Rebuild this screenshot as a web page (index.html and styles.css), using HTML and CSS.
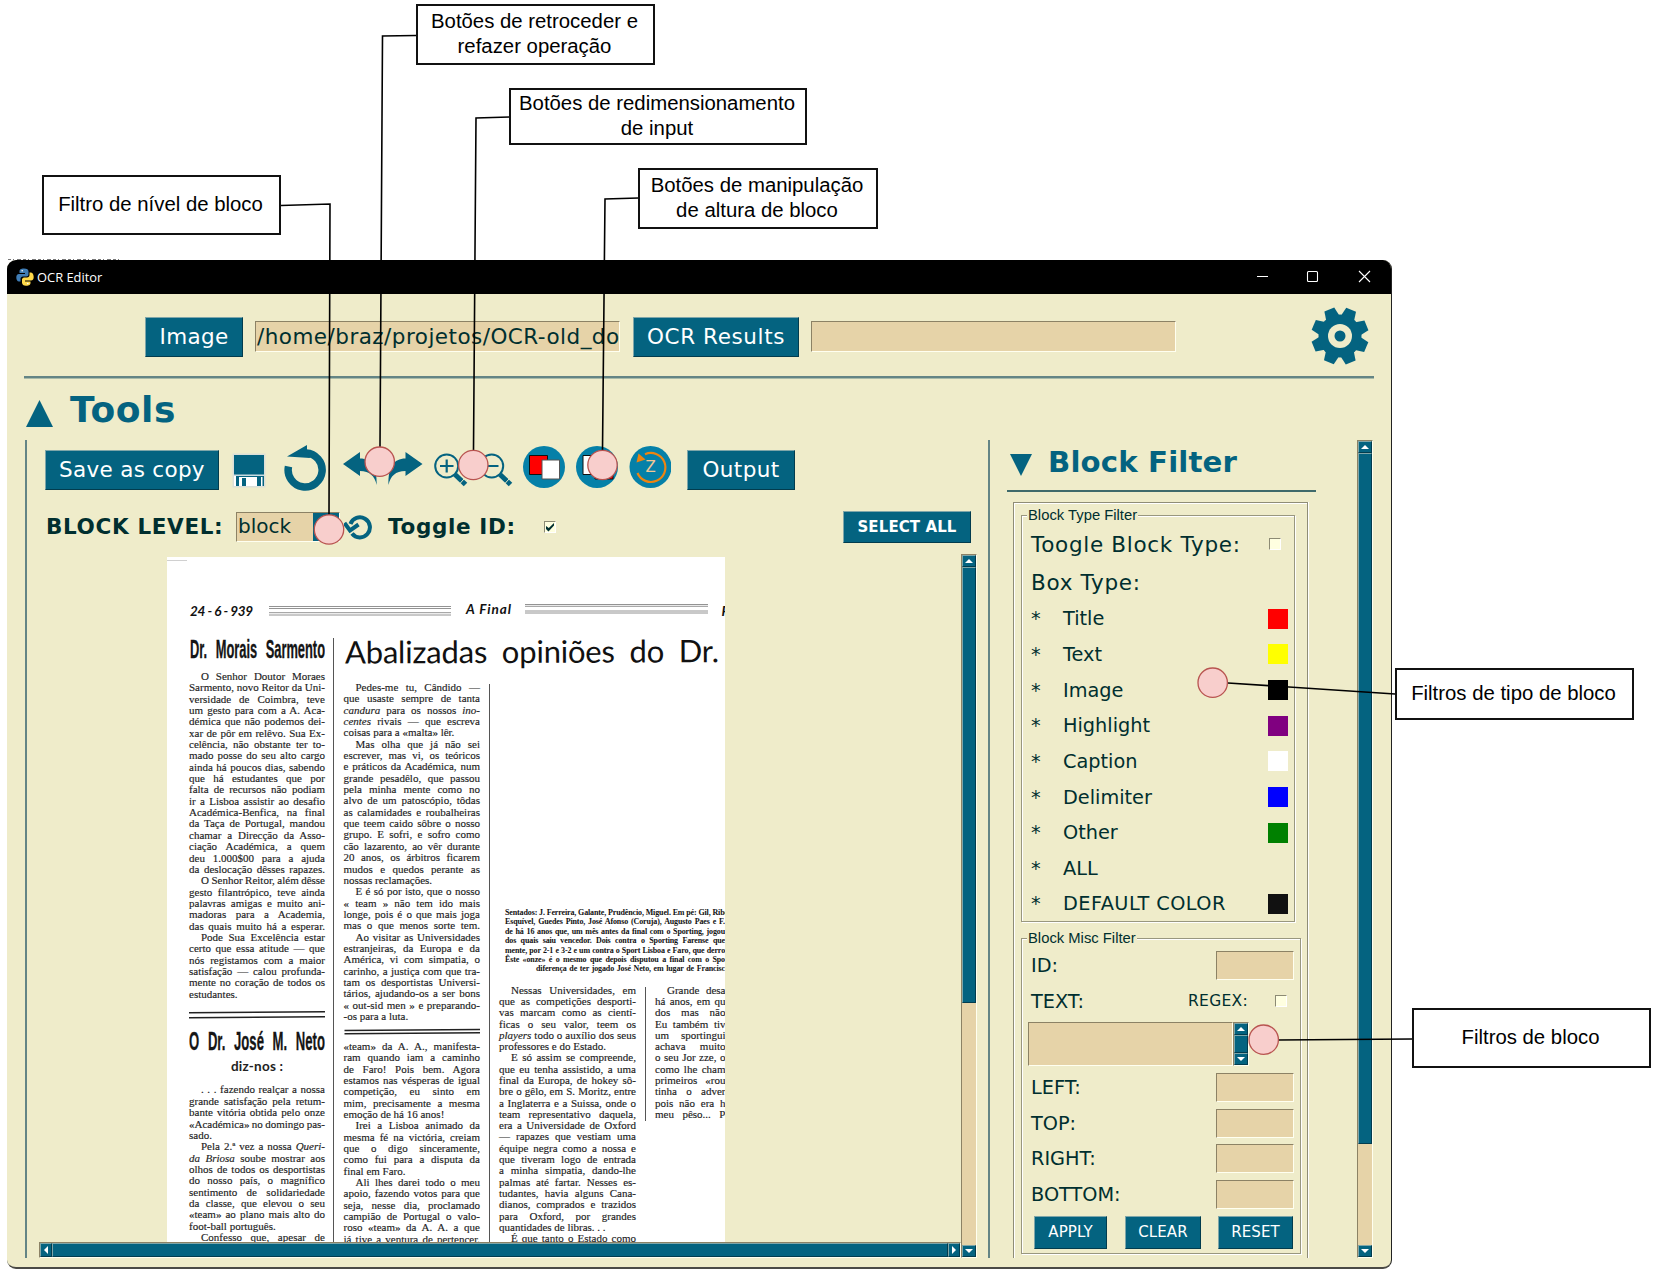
FILE: index.html
```html
<!DOCTYPE html>
<html lang="pt">
<head>
<meta charset="utf-8">
<title>OCR Editor</title>
<link rel="stylesheet" href="styles.css">
</head>
<body>
<div class="stage">
<main class="window">
  <header class="titlebar">
    <svg class="logo" viewBox="0 0 18 18" width="18" height="18"><path fill="#3f7cb5" d="M8 0.500C4.500 .5 3.500 1.700 3.500 3.500V5H9v1H3C1.200 6 .3 7.500 .3 9.500S1.200 13.500 3 13.500h1.500v-2.500c0-1.500 1-2.500 2.500-2.500h3.500c1 0 2-1 2-2v-3C12.500 1.500 11 .5 8 .5z"/><path fill="#ffd94a" d="M10 17.800c3.500 0 4.500-1.200 4.500-2.800v-1.500H9v-1h6c1.800 0 2.700-1.500 2.700-3.500S16.800 4.500 15 4.500h-1.500v2.500c0 1.500-1 2.500-2.500 2.500H8c-1 0-2 1-2 2v3c0 2 1.500 3.300 4 3.300z"/><circle cx="6.200" cy="2.800" r=".8" fill="#fff"/><circle cx="11.800" cy="15.500" r=".8" fill="#fff"/></svg>
    <span>OCR Editor</span>
    <svg class="controls" viewBox="1250 270 128 13" width="128" height="13" fill="none" stroke="#fff" stroke-width="1.100"><path d="M1257 276.500h11"/><rect x="1307.500" y="271.500" width="10" height="10" rx="1"/><path d="M1359 271l11 11M1370 271l-11 11"/></svg>
  </header>
  <section class="files">
    <button class="btn b-image">Image</button>
    <div class="field path">/home/braz/projetos/OCR-old_do</div>
    <button class="btn b-ocr">OCR Results</button>
    <div class="field path"></div>
    <svg class="gear" viewBox="-29 -29 58 58" width="58" height="58" fill="#046380"><defs><path id="tooth" d="M-7.500 -17L-5.300 -28.500H5.300L7.500 -17z"/></defs><g transform="rotate(-22)"><use href="#tooth"/><use href="#tooth" transform="rotate(45)"/><use href="#tooth" transform="rotate(90)"/><use href="#tooth" transform="rotate(135)"/><use href="#tooth" transform="rotate(180)"/><use href="#tooth" transform="rotate(225)"/><use href="#tooth" transform="rotate(270)"/><use href="#tooth" transform="rotate(315)"/></g><circle r="21.500"/><circle r="12" fill="#efecca"/><circle r="5.500"/></svg>
  </section>
  <div class="rule"></div>
  <div class="tools-head"><svg viewBox="0 0 27 27" width="27" height="27"><path d="M13.500 0L27 27H0z" fill="#046380"/></svg><h1>Tools</h1></div>
  <div class="main">
    <section class="left">
      <div class="toolbar">
        <button class="btn b-save">Save as copy</button>
        <svg class="save" viewBox="232 445 36 44" width="36" height="44"><rect x="233.500" y="453.500" width="33" height="34" fill="#dcdfd8"/><path fill="#046380" d="M235 455h30v31h-30z"/><path fill="#c8dbe0" d="M235 474.500h30v1.500h-30z"/><path fill="#fff" d="M240 477h18v9h-18z"/><path fill="#046380" d="M243 478h4v8h-4z"/><path fill="#fff" d="M235 476h2v10h-2zM262 477h1.500v9H262z"/></svg>
        <svg class="reload" viewBox="283 445 44 46" width="44" height="46"><path d="M288.500 466.500A17 17 0 1 0 306 453" fill="none" stroke="#046380" stroke-width="7.500"/><path d="M287 456.500L307 445v4.500l3 8.500z" fill="#046380"/></svg>
        <svg class="undo" viewBox="341 445 84 44" width="84" height="44" fill="#046380"><path d="M343 464l17-12v6.500c12 0 17 9 16.700 26.500-2-9-7-14-16.700-14v5z"/><path d="M422.500 464l-17-12v6.500c-12 0-17.500 9-17 26.500 2-9 7-14 17-14v5z"/></svg>
        <svg class="zoom" viewBox="432 445 82 44" width="82" height="44" fill="none" stroke="#046380" stroke-width="2"><g id="glass"><circle cx="446.700" cy="466" r="11.500"/><path d="M440 466h13.500" stroke-width="2.200"/><path d="M455 474.500L465.500 484.500" stroke-width="5"/><path d="M459.500 484l4.500-5" stroke="#efecca" stroke-width="1"/></g><path d="M446.700 459.500v13" stroke-width="2.200"/><use href="#glass" x="45"/></svg>
        <svg class="front" viewBox="523 445 42 44" width="42" height="44"><circle cx="544" cy="467" r="21" fill="#0580a8"/><path d="M529.500 455.500h18v19h-18z" fill="red" stroke="#111"/><path d="M542 460h17.500v19H542z" fill="#fff" stroke="#555"/></svg>
        <svg class="back" viewBox="576 445 42 44" width="42" height="44"><circle cx="597" cy="467" r="21" fill="#0580a8"/><path d="M595 460h18v19h-18z" fill="red" stroke="#111"/><path d="M583 455.500h18v19h-18z" fill="#fff" stroke="#111"/></svg>
        <svg class="zed" viewBox="629 445 42 44" width="42" height="44"><circle cx="650.500" cy="467" r="21" fill="#0580a8"/><path d="M645 454.200A14.500 14.500 0 1 1 637.500 473" fill="none" stroke="#ee8410" stroke-width="2.200"/><path d="M636.500 462.500l2-9 7 6z" fill="#ee8410"/><text x="650.700" y="472" text-anchor="middle" font-family="DejaVu Sans" font-size="15" fill="#f2c795">Z</text></svg>
        <button class="btn b-output">Output</button>
      </div>
      <div class="levels">
        <b>BLOCK LEVEL:</b>
        <div class="field combo"><span>block</span><i></i></div>
        <svg class="mini" viewBox="344 512 28 28" width="28" height="28"><path d="M352 532.500A10 10 0 1 0 350.500 523" fill="none" stroke="#046380" stroke-width="4"/><path d="M344.500 522l5.500 7.500 8.500-6" fill="none" stroke="#046380" stroke-width="4"/></svg>
        <b class="toggle">Toggle ID:</b>
        <div class="check"><svg viewBox="0 0 10 10" width="10" height="10"><path d="M1 4v3l2.500 2.500L9 3.500V1L3.800 6z" fill="#002f2f"/></svg></div>
        <button class="btn b-all">SELECT ALL</button>
      </div>
      <div class="viewer">
        <div class="canvas">
          <article class="scan">
            <svg viewBox="167 557 558 70" width="558" height="70" stroke="#777"><g stroke="none" fill="#111" font-family="Lato" font-style="italic" font-weight="bold" font-size="13.500"><text x="190" y="616" textLength="63">24 - 6 - 939</text><text x="466" y="614" textLength="45">A Final</text><text x="721.500" y="616">F</text></g><path d="M269 606.500h182M269 608.500h182M269 612.700h182M269 615h182M525 604.500h183M525 606.300h183M525 611h183M525 613h183" stroke-width=".8"/><path d="M167 560.500h20" stroke="#bbb" stroke-width=".7"/></svg>
            <div class="scan-body">
              <div class="col c1">
                <svg viewBox="189 627 136 44" width="136" height="44"><text class="poster" x="190" y="658" textLength="135" lengthAdjust="spacingAndGlyphs">Dr. Morais Sarmento</text></svg>
                <p>O Senhor Doutor Moraes
Sarmento, novo Reitor da Uni-
versidade de Coimbra, teve
um gesto para com a A. Aca-
démica que não podemos dei-
xar de pôr em relêvo. Sua Ex-
celência, não obstante ter to-
mado posse do seu alto cargo
ainda há poucos dias, sabendo
que há estudantes que por
falta de recursos não podiam
ir a Lisboa assistir ao desafio
Académica-Benfica, na final
da Taça de Portugal, mandou
chamar a Direcção da Asso-
ciação Académica, a quem
deu 1.000$00 para a ajuda
da deslocação dêsses rapazes.</p>
                <p>O Senhor Reitor, além dêsse
gesto filantrópico, teve ainda
palavras amigas e muito ani-
madoras para a Academia,
das quais muito há a esperar.</p>
                <p>Pode Sua Excelência estar
certo que essa atitude — que
nós registamos com a maior
satisfação — calou profunda-
mente no coração de todos os</p>
                <p class="end">estudantes.</p>
                <svg viewBox="189 1000.500 136 84.500" width="136" height="84.500"><path d="M189 1013.300l136-1M189 1018.300l136-1" stroke="#222" stroke-width="1.400"/><text class="poster" x="189" y="1050" textLength="136" lengthAdjust="spacingAndGlyphs">O Dr. José M. Neto</text><text x="231" y="1071" textLength="52" font-family="Lato" font-weight="bold" font-size="13.500" fill="#222">diz-nos :</text></svg>
                <p>. . . fazendo realçar a nossa
grande satisfação pela retum-
bante vitória obtida pelo onze
«Académica» no domingo pas-</p>
                <p class="end">sado.</p>
                <p>Pela 2.ª vez a nossa <i>Queri-
da Briosa</i> soube mostrar aos
olhos de todos os desportistas
do nosso país, o magnífico
sentimento de solidariedade
da classe, que elevou o seu
«team» ao plano mais alto do</p>
                <p class="end">foot-ball português.</p>
                <p>Confesso que, apesar de</p>
              </div>
              <div class="vrule v1"></div>
              <div class="rest">
                <svg viewBox="343.500 627 381.500 55" width="381.500" height="55"><text x="344.500" y="663.500" textLength="374" font-family="Lato" font-size="31" word-spacing="7" fill="#111" transform="rotate(-.2 345 663)">Abalizadas opiniões do Dr.</text></svg>
                <div class="cols">
                  <div class="col c2">
                    <p>Pedes-me tu, Cândido —
que usaste sempre de tanta
<i>candura</i> para os nossos <i>ino-
centes</i> rivais — que escreva</p>
                    <p class="end">coisas para a «malta» lêr.</p>
                    <p>Mas olha que já não sei
escrever, mas vi, os teóricos
e práticos da Académica, num
grande pesadêlo, que passou
pela minha mente como no
alvo de um patoscópio, tôdas
as calamidades e roubalheiras
que teem caido sôbre o nosso
grupo. E sofri, e sofro como
cão lazarento, ao vêr durante
20 anos, os árbitros ficarem
mudos e quedos perante as</p>
                    <p class="end">nossas reclamações.</p>
                    <p>E é só por isto, que o nosso
« team » não tem ido mais
longe, pois é o que mais joga
mas o que menos sorte tem.</p>
                    <p>Ao visitar as Universidades
estranjeiras, da Europa e da
América, vi com simpatia, o
carinho, a justiça com que tra-
tam os desportistas Universi-
tários, ajudando-os a ser bons
« out-sid men » e preparando-</p>
                    <p class="end">-os para a luta.</p>
                    <svg viewBox="343.500 1022 136.500 18.500" width="136.500" height="18.500"><path d="M344 1030.500l136-1M344 1033.700l136-1" stroke="#222" stroke-width="1.400"/></svg>
                    <p class="flush">«team» da A. A., manifesta-
ram quando iam a caminho
de Faro! Pois bem. Agora
estamos nas vésperas de igual
competição, eu sinto em
mim, precisamente a mesma</p>
                    <p class="end">emoção de há 16 anos!</p>
                    <p>Irei a Lisboa animado da
mesma fé na victória, creiam
que o digo sinceramente,
como fui para a disputa da</p>
                    <p class="end">final em Faro.</p>
                    <p>Ali lhes darei todo o meu
apoio, fazendo votos para que
seja, nesse dia, proclamado
campião de Portugal o valo-
roso «team» da A. A. a que
já tive a ventura de pertencer.</p>
                  </div>
                  <div class="vrule v2"></div>
                  <div class="far">
                    <div class="caption"><span>Sentados: J. Ferreira, Galante, Prudêncio, Miguel. Em pé: Gil, Ribe</span><span>Esquível, Guedes Pinto, José Afonso (Coruja), Augusto Paes e F.</span><span>de há 16 anos que, um mês antes da final com o Sporting, jogou</span><span>dos quais saiu vencedor. Dois contra o Sporting Farense que</span><span>mente, por 2-1 e 3-2 e um contra o Sport Lisboa e Faro, que derro</span><span>Êste «onze» é o mesmo que depois disputou a final com o Spo</span><span class="in">diferença de ter jogado José Neto, em lugar de Francisc</span></div>
                    <div class="cols">
                      <div class="col c3">
                        <p>Nessas Universidades, em
que as competições desporti-
vas marcam como as cientí-
ficas o seu valor, teem os
<i>players</i> todo o auxílio dos seus</p>
                        <p class="end">professores e do Estado.</p>
                        <p>E só assim se compreende,
que eu tenha assistido, a uma
final da Europa, de hokey sô-
bre o gêlo, em S. Moritz, entre
a Inglaterra e a Suissa, onde o
team representativo daquela,
era a Universidade de Oxford
— rapazes que vestiam uma
équipe negra como a nossa e
que tiveram logo de entrada
a minha simpatia, dando-lhe
palmas até fartar. Nesses es-
tudantes, havia alguns Cana-
dianos, comprados e trazidos
para Oxford, por grandes</p>
                        <p class="end">quantidades de libras. . .</p>
                        <p>É que tanto o Estado como</p>
                      </div>
                      <div class="vrule v3"></div>
                      <div class="col c4">
                        <p>Grande desa
há anos, em qu
dos mas não
Eu também tiv
um sportingui
achava muito
o seu Jor zze, o
como lhe cham
primeiros «rou
tinha o adver
pois não era h
meu pêso... P</p>
                      </div>
                    </div>
                  </div>
                </div>
              </div>
            </div>
          </article>
        </div>
        <div class="sb v"><i class="arr up"></i><i class="thumb doc"></i><i class="trough"></i><i class="arr down"></i></div>
        <div class="sb h"><i class="arr lt"></i><i class="thumb"></i><i class="arr rt"></i></div>
      </div>
    </section>
    <section class="right">
      <div class="filter">
        <div class="filter-head"><svg viewBox="0 0 22 22" width="22" height="22"><path d="M0 0h22L11 22z" fill="#046380"/></svg><h2>Block Filter</h2></div>
        <div class="panel">
          <div class="group types">
            <h3>Block Type Filter</h3>
            <div class="big">Toogle Block Type:<div class="check"></div></div>
            <div class="big box">Box Type:</div>
            <ul>
              <li><span>*</span>Title<i class="red"></i></li>
              <li><span>*</span>Text<i class="yellow"></i></li>
              <li><span>*</span>Image<i class="black"></i></li>
              <li><span>*</span>Highlight<i class="purple"></i></li>
              <li><span>*</span>Caption<i class="white"></i></li>
              <li><span>*</span>Delimiter<i class="blue"></i></li>
              <li><span>*</span>Other<i class="green"></i></li>
              <li><span>*</span>ALL</li>
              <li class="default"><span>*</span>DEFAULT COLOR<i class="dark"></i></li>
            </ul>
          </div>
          <div class="group misc">
            <h3>Block Misc Filter</h3>
            <div class="row">ID:<div class="field"></div></div>
            <div class="row">TEXT:<small>REGEX:</small><div class="check"></div></div>
            <div class="area"><div class="field"></div><div class="sb v"><i class="arr up"></i><i class="thumb"></i><i class="arr down"></i></div></div>
            <div class="row">LEFT:<div class="field"></div></div>
            <div class="row">TOP:<div class="field"></div></div>
            <div class="row">RIGHT:<div class="field"></div></div>
            <div class="row">BOTTOM:<div class="field"></div></div>
            <div class="actions"><button class="btn">APPLY</button><button class="btn">CLEAR</button><button class="btn">RESET</button></div>
          </div>
        </div>
      </div>
      <div class="sb v side"><i class="arr up"></i><i class="thumb tools"></i><i class="trough"></i><i class="arr down"></i></div>
    </section>
  </div>
</main>
<svg class="wires" viewBox="0 0 1660 1279" width="1660" height="1279" fill="none" stroke="#000" stroke-width="1.600">
  <path d="M8 259.500h112" stroke="#777" stroke-width="1" stroke-dasharray="3 2 1 3 4 2"/>
  <path d="M281 205.500L330 204L329 515M416 35.500L382.500 36L380 447M509.500 117L476 118L473.500 450M638.500 198L605 199L602.500 450M1228 683L1395 694M1278 1040L1412 1039"/>
  <g fill="#f8cecc" stroke="#b85450" stroke-width="1.300"><circle cx="329" cy="529.500" r="14.700"/><circle cx="379.700" cy="461.700" r="14.700"/><circle cx="473.300" cy="465" r="14.700"/><circle cx="602.500" cy="465" r="14.700"/><circle cx="1212.700" cy="682.700" r="14.700"/><circle cx="1263.700" cy="1039.700" r="14.700"/></g>
</svg>
<div class="note n1">Botões de retroceder e<br>refazer operação</div>
<div class="note n2">Botões de redimensionamento<br>de input</div>
<div class="note n3">Botões de manipulação<br>de altura de bloco</div>
<div class="note n4">Filtro de nível de bloco</div>
<div class="note n5">Filtros de tipo de bloco</div>
<div class="note n6">Filtros de bloco</div>
</div>
</body>
</html>
```
FILE: styles.css
```css
* { box-sizing: border-box; }
body { margin: 0; background: #fff; }
h1, h2, h3, p, ul { margin: 0; padding: 0; }
svg { display: block; flex: none; }
.stage { position: relative; width: 1660px; height: 1279px; padding: 260px 0 0 7px; overflow: hidden; }
.window { width: 1385px; height: 1009px; display: flex; flex-direction: column; overflow: hidden; border-radius: 9px; background: #efecca; border-right: 1px solid #222; border-bottom: 2px solid #4a4a46; font-family: "DejaVu Sans", sans-serif; font-size: 21.500px; color: #002f2f; }
.titlebar { flex: none; height: 34px; background: #000; color: #fff; display: flex; align-items: center; padding-left: 9px; font: 12.900px "Open Sans", sans-serif; }
.titlebar span { margin: 0 0 0 3px; }
.controls { margin: 0 13px 1px auto; }

.btn { flex: none; height: 40px; padding: 0 0 1px; font: 21.500px "DejaVu Sans", sans-serif; letter-spacing: .3px; color: #fff; background: #046380; border: 1px solid; border-color: #7fa6a9 #023c4e #023c4e #7fa6a9; border-radius: 0; white-space: nowrap; }
.field { flex: none; background: #e6d3a8; border: 1px solid; border-color: #8c8265 #fffff0 #fffff0 #8c8265; overflow: hidden; white-space: nowrap; }
.check { width: 12px; height: 12px; flex: none; background: #ffffe0; border: 1px solid; border-color: #8c8a74 #fff #fff #8c8a74; }

.files { flex: none; height: 82px; padding: 3px 0 0 138px; display: flex; align-items: center; }
.path { width: 365px; height: 31px; padding-left: 1px; line-height: 30px; letter-spacing: .47px; }
.b-image { width: 98px; margin-right: 12px; }
.b-ocr { width: 166px; margin: 0 12px 0 13px; letter-spacing: .6px; }
.gear { margin-left: 135px; margin-top: -2px; }
.rule { flex: none; height: 3px; margin: 0 17px 0 17px; background: #648585; border-bottom: 1px solid #a9bba9; }
.tools-head { flex: none; height: 61px; padding: 0 0 0 19px; display: flex; align-items: center; }
.tools-head svg { margin-top: 7px; }
.tools-head h1 { margin: 1px 0 0 17px; font-size: 36px; line-height: 42px; letter-spacing: .6px; color: #046380; }

.main { flex: none; height: 818px; padding-left: 18px; display: flex; }
.left { width: 965px; border-left: 2px solid #648585; border-right: 2px solid #648585; }
.toolbar { height: 60px; padding: 10px 0 0 18px; display: flex; }
.toolbar svg { margin-top: -5px; }
.b-save { width: 174px; }
.save { margin-left: 12px; }
.reload { margin-left: 16px; }
.undo { margin-left: 14px; }
.zoom { margin-left: 7px; }
.front { margin-left: 9px; }
.back, .zed { margin-left: 11px; }
.b-output { width: 108px; margin-left: 16px; letter-spacing: .4px; }
.levels { height: 54px; padding: 0 0 1px 19px; display: flex; align-items: center; }
.levels b { width: 190px; font-size: 21.500px; letter-spacing: .65px; white-space: nowrap; }
.combo { width: 104px; height: 30px; display: flex; line-height: 27px; font-size: 20px; }
.combo span { flex: 1; padding-left: 1px; }
.combo i { width: 26px; background: #046380; }
.mini { margin-left: 4px; }
.levels .toggle { margin-left: 16px; width: 156px; }
.b-all { width: 128px; height: 32px; margin: 1px 0 0 287px; font-size: 15px; font-weight: bold; letter-spacing: .1px; }

.viewer { margin-left: 12px; width: 938px; display: grid; grid-template: 688px 16px / 922px 16px; }
.canvas { padding: 3px 0 0 128px; overflow: hidden; }
.scan { width: 558px; height: 685px; overflow: hidden; background: #fff; }
.sb { display: flex; background: #e6d3a8; border: 1px solid; border-color: #8c8265 #fffff0 #fffff0 #8c8265; }
.sb.v { grid-row: 1 / 3; grid-column: 2; flex-direction: column; width: 16px; }
.sb.h { grid-row: 2; grid-column: 1; }
.thumb, .arr { background: #046380; border: 1px solid; border-color: #7fa6a9 #023c4e #023c4e #7fa6a9; }
.thumb { flex: 1; }
.trough { flex: 1; }
.thumb.doc { flex: none; height: 436px; }
.thumb.tools { flex: none; height: 691px; }
.arr { flex: none; width: 14px; height: 12px; display: grid; place-items: center; }
.h .arr { width: 12px; height: 14px; }
.arr::before { content: ""; border: 4px solid transparent; }
.up::before { border-width: 0 4px 4px; border-bottom-color: #fff; }
.down::before { border-width: 4px 4px 0; border-top-color: #fff; }
.lt::before { border-width: 4px 4px 4px 0; border-right-color: #fff; }
.rt::before { border-width: 4px 0 4px 4px; border-left-color: #fff; }

.scan-body, .cols { display: flex; }
.col { flex: none; font: 11px/11.340px "Liberation Serif", serif; color: #1c1c1c; -webkit-text-stroke: .15px #222; }
.col p { white-space: pre-line; text-align-last: justify; word-spacing: -2px; text-indent: 12px; }
.col p.end { text-align-last: left; text-indent: 0; word-spacing: 0; }
.col p.flush { text-indent: 0; }
.poster { font: bold 26px "Liberation Sans", sans-serif; word-spacing: 10px; fill: #151515; stroke: #151515; stroke-width: .3px; }
.c1 { width: 136px; margin-left: 22px; }
.c2 { width: 136.500px; }
.c3 { width: 137px; line-height: 11.290px; }
.c4 { width: 70.500px; margin-left: 9px; line-height: 11.290px; }
.rest { width: 381.500px; flex: none; }
.vrule { flex: none; width: 1px; background: #555; }
.v1 { margin: 11px 9.500px 0 8px; }
.v2 { margin: 2px 9px 0 9px; }
.v3 { margin: 2px 0 0 9px; height: 134px; }
.far { width: 226px; flex: none; }
.caption { margin: 226px 0 11px 6px; width: 220px; font: bold 8px/9.380px "Liberation Serif", serif; color: #111; }
.caption span { display: block; height: 9.380px; white-space: nowrap; text-align-last: justify; letter-spacing: -.13px; }
.caption .in { padding-left: 31px; }

.right { display: flex; }
.filter { width: 309px; margin-left: 17px; }
.filter-head { height: 52px; padding-left: 3px; display: flex; align-items: center; border-bottom: 2px solid #3f6a6b; }
.filter-head svg { margin-top: 0; }
.filter-head h2 { margin: -6px 0 0 16px; font-size: 29.200px; letter-spacing: .15px; line-height: 36px; color: #046380; white-space: nowrap; }
.panel { width: 295px; height: 756px; margin: 10px 0 0 6px; padding: 12px 6px 0 7px; border: 1px solid #8f8d76; border-bottom: 0; box-shadow: inset 1px 1px 0 #fff, 1px 0 0 #fff; }
.group { border: 1px solid #99977f; box-shadow: inset 1px 1px 0 #fff, 1px 1px 0 #fff; }
.group h3 { width: max-content; height: 16px; margin: -9px 0 0 5px; padding: 0 1px; background: #efecca; font: 14.800px/16px "Liberation Sans", sans-serif; }
.types { width: 274px; height: 407px; }
.big { height: 38px; padding: 0 13px 0 9px; display: flex; justify-content: space-between; align-items: center; margin-top: 2px; letter-spacing: .7px; }
.big.box { margin-top: 0; }
.types ul { list-style: none; font-size: 19.300px; }
.types li { height: 35.650px; padding: 0 6px 0 9px; display: flex; align-items: center; }
.types li.default { letter-spacing: .45px; }
.types li span { width: 32px; letter-spacing: 0; }
.types li i { width: 20px; height: 20px; margin-left: auto; }
.red { background: red; }
.yellow { background: #ff0; }
.black { background: #000; }
.purple { background: purple; }
.white { background: #fff; }
.blue { background: #00f; }
.green { background: green; }
.dark { background: #111; }
.misc { width: 280px; height: 316px; margin-top: 16px; }
.row { height: 35.500px; padding: 0 6px 0 9px; display: flex; align-items: center; font-size: 19.300px; }
.misc h3 + .row { margin-top: 2px; }
.row .field { width: 78px; height: 29px; margin-left: auto; }
.row small { margin-left: auto; font-size: 15.500px; letter-spacing: .3px; }
.row .check { margin: 0 7px 0 27px; }
.area { height: 44px; margin: 3px 0 4px 6px; display: flex; }
.area .field { width: 205px; }
.actions { padding: 4px 0 0 12px; display: flex; }
.actions .btn { width: 73px; height: 33px; margin-right: 18px; font-size: 15px; letter-spacing: .1px; padding-bottom: 2px; }
.actions .btn:nth-child(2) { width: 76px; margin-right: 17px; }
.actions .btn:nth-child(3) { width: 75px; margin-right: 0; }
.side { margin-left: 41px; }

.wires { position: absolute; left: 0; top: 0; }
.note { position: absolute; display: flex; align-items: center; justify-content: center; text-align: center; padding: 0 2px 1px 0; background: #fff; border: 2px solid #111; font: 20.350px/25px "Liberation Sans", sans-serif; color: #000; white-space: nowrap; }
.n1 { left: 416px; top: 4px; width: 239px; height: 61px; }
.n2 { left: 509px; top: 88px; width: 298px; height: 57px; }
.n3 { left: 638px; top: 168px; width: 240px; height: 61px; }
.n4 { left: 42px; top: 175px; width: 239px; height: 60px; }
.n5 { left: 1395px; top: 668px; width: 239px; height: 52px; }
.n6 { left: 1412px; top: 1008px; width: 239px; height: 60px; }
```
